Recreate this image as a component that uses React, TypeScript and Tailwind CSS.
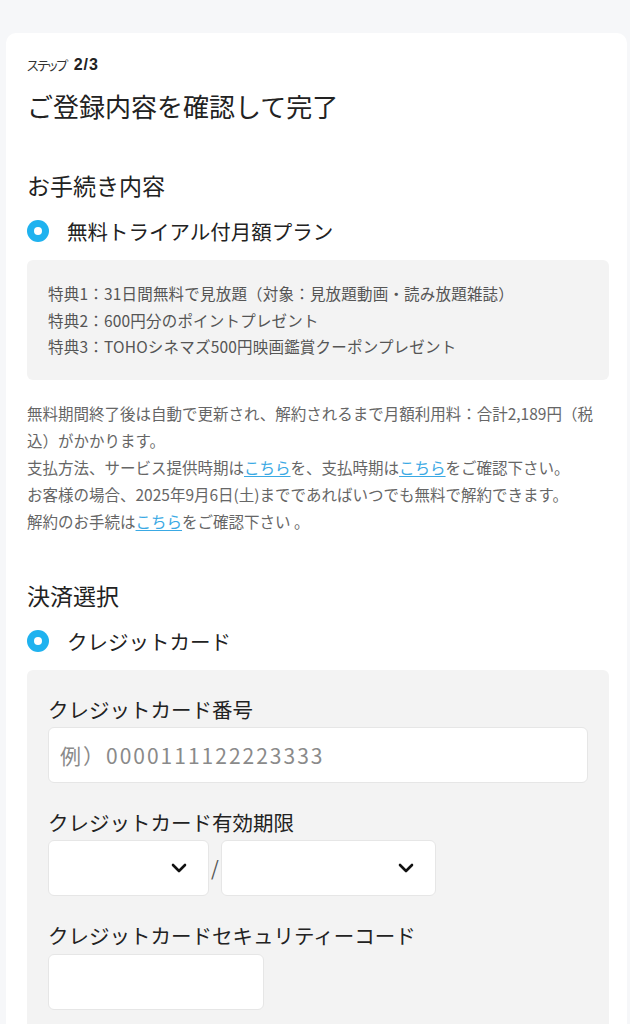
const font = { fontFamily: '"Noto Sans CJK JP", "Noto Sans", sans-serif' };

export default function App() {
  return (
    <div className="min-h-screen bg-[#f6f7f9] pt-[33px] pl-[6px] pr-[3px] text-[#222]" style={font}>
      <div className="rounded-t-[10px] bg-white pl-[21px] pr-[18px] pt-[22px] pb-10">
        <div className="flex items-baseline gap-[7px] leading-[20px]">
          <span className="text-[13px] tracking-[-1.5px] text-[#333] [font-feature-settings:'palt']">ステップ</span>
          <span className="text-[16px] font-bold tracking-[1px]" style={{ fontFamily: '"Liberation Sans", "Noto Sans CJK JP", sans-serif' }}>2/3</span>
        </div>
        <h1 className="mt-[13px] text-[26px] leading-[36px]">ご登録内容を確認して完了</h1>

        <Heading className="mt-[45px]">お手続き内容</Heading>
        <Radio label="無料トライアル付月額プラン" className="mt-[15px]" />

        <div className="mt-[14px] rounded-md bg-[#f3f3f3] px-[21px] py-[20px] text-[15.5px] leading-[26.5px] tracking-[0.2px] text-[#555]">
          <p>特典1：31日間無料で見放題（対象：見放題動画・読み放題雑誌）</p>
          <p>特典2：600円分のポイントプレゼント</p>
          <p>特典3：TOHOシネマズ500円映画鑑賞クーポンプレゼント</p>
        </div>

        <div className="mt-[20px] text-[15.5px] leading-[27.2px] text-[#666]">
          <p>無料期間終了後は自動で更新され、解約されるまで月額利用料：合計2,189円（税込）がかかります。</p>
          <p>
            支払方法、サービス提供時期は<Link>こちら</Link>を、支払時期は<Link>こちら</Link>をご確認下さい。
          </p>
          <p>お客様の場合、2025年9月6日(土)までであればいつでも無料で解約できます。</p>
          <p>
            解約のお手続は<Link>こちら</Link>をご確認下さい 。
          </p>
        </div>

        <Heading className="mt-[43px]">決済選択</Heading>
        <Radio label="クレジットカード" className="mt-[15px]" />

        <div className="mt-[14px] rounded-t-md bg-[#f3f3f3] px-[21px] pt-[25px] pb-10">
          <Label>クレジットカード番号</Label>
          <input
            className="mt-[4px] block h-[56px] w-full rounded-md border border-[#e6e6e6] bg-white px-[11px] text-[21px] tracking-[2px] text-[#222] outline-none placeholder:text-[#8a8a8a]"
            style={font}
            placeholder="例）0000111122223333"
          />

          <Label className="mt-[25px]">クレジットカード有効期限</Label>
          <div className="mt-[4px] flex items-center">
            <Select className="w-[161px]" />
            <span className="w-[12px] text-center text-[20px] text-[#555]">/</span>
            <Select className="w-[215px]" />
          </div>

          <Label className="mt-[25px]">クレジットカードセキュリティーコード</Label>
          <input
            className="mt-[5px] block h-[56px] w-[216px] rounded-md border border-[#e6e6e6] bg-white px-[11px] text-[20px] outline-none"
            style={font}
          />
        </div>
      </div>
    </div>
  );
}

function Heading({ children, className = '' }: { children: React.ReactNode; className?: string }) {
  return <h2 className={`text-[23px] leading-[32px] ${className}`}>{children}</h2>;
}

function Label({ children, className = '' }: { children: React.ReactNode; className?: string }) {
  return <div className={`text-[20.5px] leading-[28px] ${className}`}>{children}</div>;
}

function Link({ children }: { children: React.ReactNode }) {
  return <span className="text-[#3aa9e4] underline underline-offset-2">{children}</span>;
}

function Radio({ label, className = '' }: { label: string; className?: string }) {
  return (
    <div className={`flex h-[30px] items-center gap-[18px] ${className}`}>
      <span className="flex h-[22px] w-[22px] items-center justify-center rounded-full bg-[#1fb2ef]">
        <span className="h-[8px] w-[8px] rounded-full bg-white" />
      </span>
      <span className="text-[20.5px] leading-[30px]">{label}</span>
    </div>
  );
}

function Select({ className = '' }: { className?: string }) {
  return (
    <div className={`flex h-[56px] items-center justify-end rounded-md border border-[#e6e6e6] bg-white pr-[21px] ${className}`}>
      <svg width="16" height="10" viewBox="0 0 16 10" fill="none">
        <path d="M2 2l6 6 6-6" stroke="#111" strokeWidth="2.6" strokeLinecap="round" strokeLinejoin="round" />
      </svg>
    </div>
  );
}
